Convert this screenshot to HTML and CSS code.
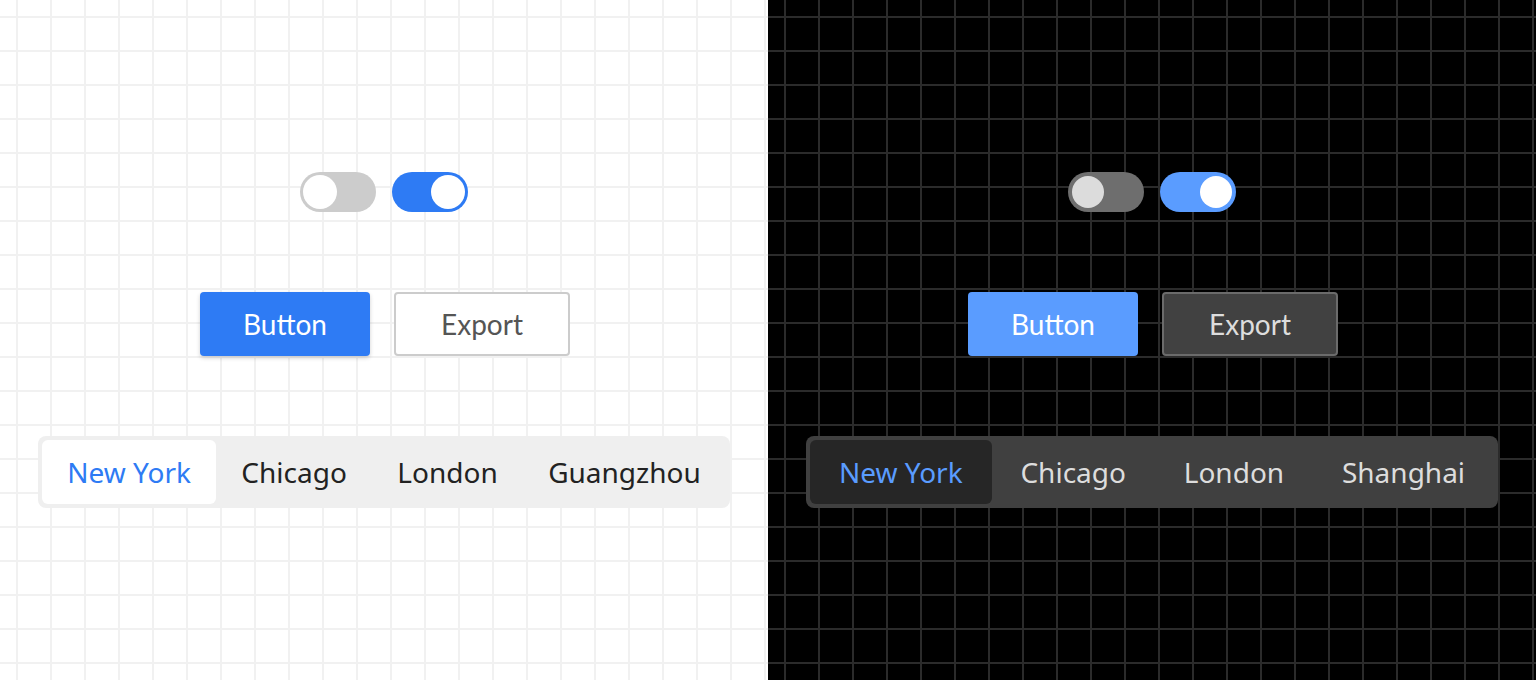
FILE: index.html
```html
<!DOCTYPE html>
<html>
<head>
<meta charset="utf-8">
<link rel="stylesheet" href="styles.css">
</head>
<body>
<div class="page">
  <section class="panel light">
    <div class="toggles">
      <div class="toggle off"><span class="knob"></span></div>
      <div class="toggle on"><span class="knob"></span></div>
    </div>
    <div class="buttons">
      <button class="btn primary">Button</button>
      <button class="btn secondary">Export</button>
    </div>
    <div class="segmented">
      <div class="seg active">New York</div>
      <div class="seg">Chicago</div>
      <div class="seg">London</div>
      <div class="seg">Guangzhou</div>
    </div>
  </section>
  <section class="panel dark">
    <div class="toggles">
      <div class="toggle off"><span class="knob"></span></div>
      <div class="toggle on"><span class="knob"></span></div>
    </div>
    <div class="buttons">
      <button class="btn primary">Button</button>
      <button class="btn secondary">Export</button>
    </div>
    <div class="segmented">
      <div class="seg active">New York</div>
      <div class="seg">Chicago</div>
      <div class="seg">London</div>
      <div class="seg">Shanghai</div>
    </div>
  </section>
</div>
</body>
</html>
```
FILE: styles.css
```css
html, body {
  margin: 0;
  padding: 0;
}
body {
  font-family: "Noto Sans", "Liberation Sans", sans-serif;
}
.page {
  display: grid;
  grid-template-columns: 768px 768px;
  height: 680px;
  overflow: hidden;
}
.panel {
  display: flex;
  flex-direction: column;
  align-items: center;
  justify-content: center;
  gap: 80px;
  height: 680px;
  background-size: 34px 34px;
  background-position: 16px 16px;
}
.light {
  background-color: #ffffff;
  background-image:
    linear-gradient(to right, #f1f1f1 2px, transparent 2px),
    linear-gradient(to bottom, #f1f1f1 2px, transparent 2px);
}
.dark {
  background-color: #000000;
  background-image:
    linear-gradient(to right, #2b2b2b 2px, transparent 2px),
    linear-gradient(to bottom, #2b2b2b 2px, transparent 2px);
}
.toggles {
  display: flex;
  gap: 16px;
}
.toggle {
  width: 76px;
  height: 40px;
  border-radius: 20px;
  box-sizing: border-box;
  padding: 3px;
  display: flex;
}
.toggle .knob {
  width: 34px;
  height: 34px;
  border-radius: 50%;
}
.toggle.on {
  justify-content: flex-end;
}
.light .toggle.off { background: #cccccc; }
.light .toggle.off .knob { background: #ffffff; }
.light .toggle.on { background: #2e7bf4; }
.light .toggle.on .knob { background: #ffffff; }
.dark .toggle { padding: 4px; }
.dark .toggle .knob { width: 32px; height: 32px; }
.dark .toggle.off { background: #6e6e6e; }
.dark .toggle.off .knob { background: #dcdcdc; }
.dark .toggle.on { background: #5a9cff; }
.dark .toggle.on .knob { background: #ffffff; }

.buttons {
  display: flex;
  gap: 24px;
  padding-left: 2px;
}
.btn {
  height: 64px;
  border-radius: 4px;
  font-family: "Lato", "Noto Sans", sans-serif;
  font-size: 28px;
  border: none;
  padding: 0;
  box-sizing: border-box;
}
.btn.primary { width: 170px; }
.btn.secondary { width: 176px; border: 2px solid; }
.light .btn.primary {
  background: #2e7bf4;
  color: #ffffff;
  box-shadow: 0 2px 4px rgba(0,0,0,0.18);
}
.light .btn.secondary {
  background: #ffffff;
  border-color: #cccccc;
  color: #555555;
}
.dark .btn.primary {
  background: #5a9cff;
  color: #ffffff;
}
.dark .btn.secondary {
  background: #414141;
  border-color: #6b6b6b;
  color: #dddddd;
}

.segmented {
  display: flex;
  width: 692px;
  height: 72px;
  box-sizing: border-box;
  padding: 4px;
  border-radius: 8px;
}
.seg {
  flex: 1 1 auto;
  display: flex;
  align-items: center;
  justify-content: center;
  font-size: 28px;
  border-radius: 6px;
  white-space: nowrap;
}
.light .segmented { background: #efefef; }
.light .seg { color: #222222; }
.light .seg.active { background: #ffffff; color: #2e7bf4; }
.dark .segmented { background: #404040; }
.dark .seg { color: #dddddd; }
.dark .seg.active { background: #262626; color: #5a9cff; }
```
